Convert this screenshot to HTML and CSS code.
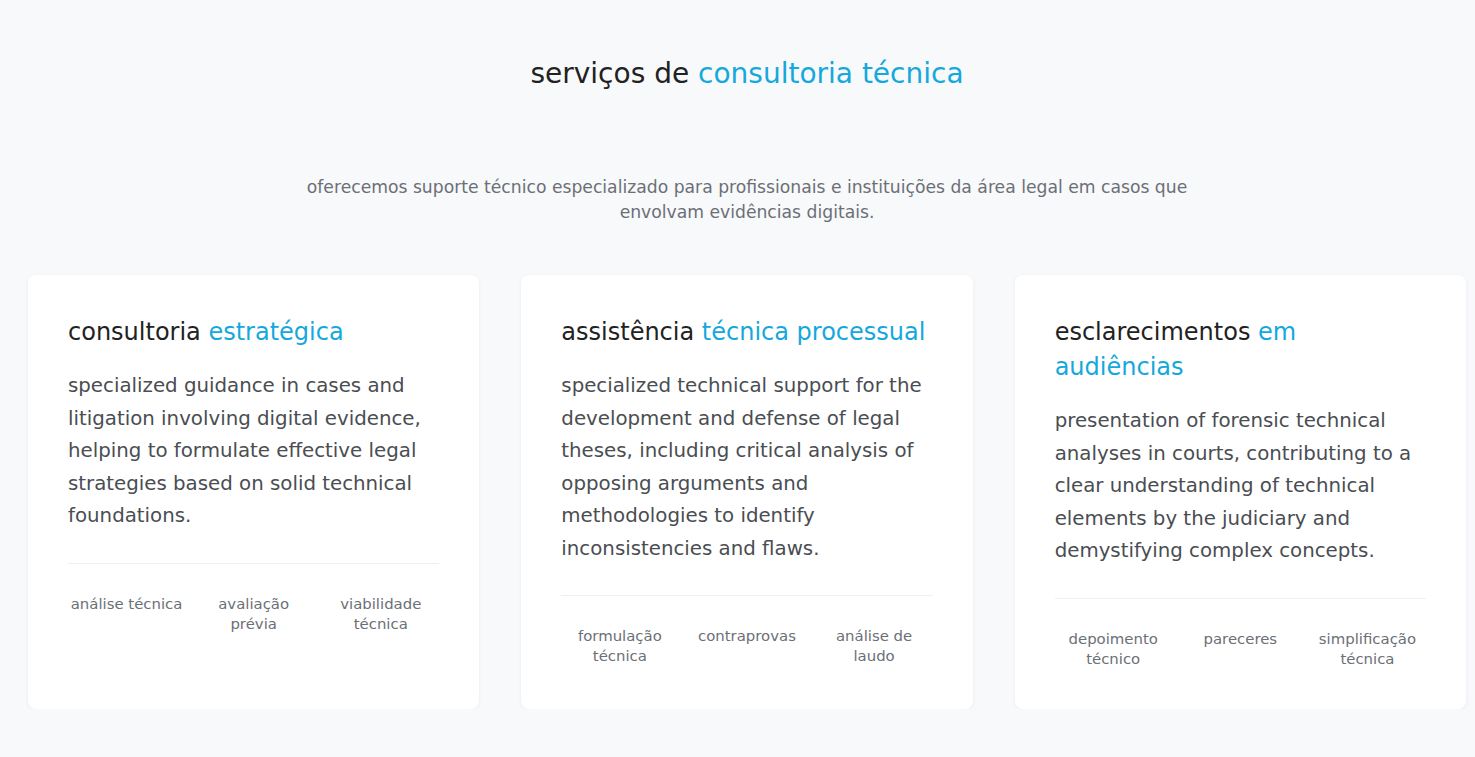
FILE: index.html
```html
<!DOCTYPE html>
<html lang="pt">
<head>
<meta charset="utf-8">
<title>serviços de consultoria técnica</title>
<link rel="stylesheet" href="styles.css">
</head>
<body>
<section class="services">
  <h2 class="section-title">serviços de <span class="accent">consultoria técnica</span></h2>
  <p class="section-lead">oferecemos suporte técnico especializado para profissionais e instituições da área legal em casos que envolvam evidências digitais.</p>
  <div class="cards">
    <article class="card">
      <h3 class="card-title">consultoria <span class="accent">estratégica</span></h3>
      <p class="card-text">specialized guidance in cases and litigation involving digital evidence, helping to formulate effective legal strategies based on solid technical foundations.</p>
      <ul class="tags">
        <li>análise técnica</li>
        <li>avaliação prévia</li>
        <li>viabilidade técnica</li>
      </ul>
    </article>
    <article class="card">
      <h3 class="card-title">assistência <span class="accent">técnica processual</span></h3>
      <p class="card-text">specialized technical support for the development and defense of legal theses, including critical analysis of opposing arguments and methodologies to identify inconsistencies and flaws.</p>
      <ul class="tags">
        <li>formulação técnica</li>
        <li>contraprovas</li>
        <li>análise de laudo</li>
      </ul>
    </article>
    <article class="card">
      <h3 class="card-title">esclarecimentos <span class="accent">em audiências</span></h3>
      <p class="card-text">presentation of forensic technical analyses in courts, contributing to a clear understanding of technical elements by the judiciary and demystifying complex concepts.</p>
      <ul class="tags">
        <li>depoimento técnico</li>
        <li>pareceres</li>
        <li>simplificação técnica</li>
      </ul>
    </article>
  </div>
</section>
</body>
</html>
```
FILE: styles.css
```css
* { box-sizing: border-box; }
html, body { margin: 0; padding: 0; }
body {
  background: #f8f9fb;
  font-family: "DejaVu Sans", "Noto Sans", sans-serif;
  color: #2b2b2b;
}
.services {
  width: 1438px;
  margin-left: 28px;
  padding-top: 56px;
}
.accent { color: #15a8dc; }
.section-title {
  margin: 0;
  text-align: center;
  font-weight: 400;
  font-size: 28px;
  line-height: 36px;
  color: #222;
}
.section-lead {
  width: 900px;
  margin: 83px auto 0;
  text-align: center;
  font-size: 17.2px;
  line-height: 25px;
  color: #6b6f76;
}
.cards {
  display: grid;
  grid-template-columns: repeat(3, 1fr);
  gap: 42px;
  margin-top: 50px;
  align-items: stretch;
}
.card {
  background: #fff;
  border-radius: 8px;
  box-shadow: 0 1px 4px rgba(20, 30, 50, 0.06);
  padding: 40px;
}
.card-title {
  margin: 0;
  font-weight: 400;
  font-size: 24px;
  line-height: 35px;
  color: #222;
}
.card-text {
  margin: 20px 0 0;
  font-size: 19.8px;
  line-height: 32.5px;
  color: #4a4d52;
  padding-bottom: 30px;
  border-bottom: 1px solid #eef0f2;
}
.tags {
  list-style: none;
  margin: 30px 0 0;
  padding: 0;
  display: grid;
  grid-template-columns: repeat(3, 1fr);
  gap: 10px;
}
.tags li {
  text-align: center;
  font-size: 14.9px;
  line-height: 20px;
  color: #6b6f76;
}
```
